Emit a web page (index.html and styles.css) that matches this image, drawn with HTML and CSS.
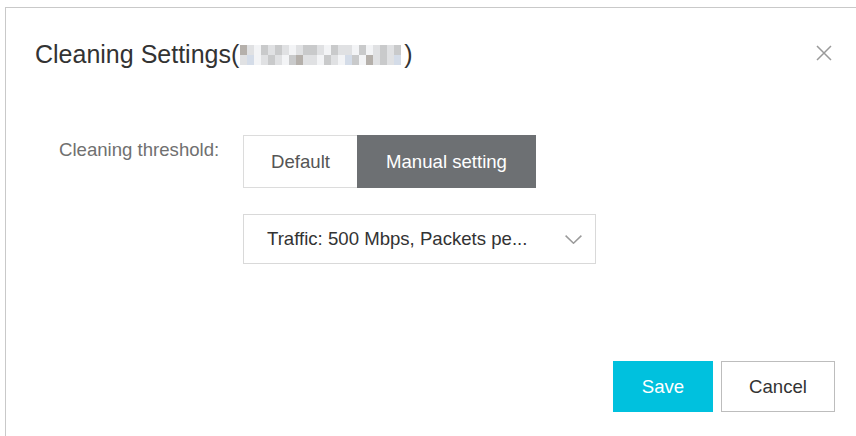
FILE: index.html
```html
<!DOCTYPE html>
<html lang="en">
<head>
<meta charset="utf-8">
<title>Cleaning Settings</title>
<link rel="stylesheet" href="styles.css">
</head>
<body>
<div class="dialog">
  <div class="dialog-header">
    <h1 class="dialog-title">Cleaning Settings(<span class="masked" aria-label="hidden address"><i class="d"></i><i class="l"></i><i class="w"></i><i class="m"></i><i class="l"></i><i class="m"></i><i class="l"></i><i class="w"></i><i class="l"></i><i class="m"></i><i class="m"></i><i class="l"></i><i class="w"></i><i class="m"></i><i class="l"></i><i class="l"></i><i class="w"></i><i class="m"></i><i class="w"></i><i class="l"></i><i class="m"></i><i class="l"></i><i class="m"></i><i class="l"></i><i class="b"></i><i class="w"></i><i class="l"></i><i class="m"></i><i class="l"></i><i class="w"></i><i class="m"></i><i class="d"></i><i class="l"></i><i class="l"></i><i class="w"></i><i class="m"></i><i class="l"></i><i class="w"></i><i class="b"></i><i class="m"></i><i class="w"></i><i class="d"></i><i class="l"></i><i class="m"></i><i class="l"></i><i class="b"></i></span>)</h1>
    <button class="close" type="button" aria-label="Close">
      <svg width="16" height="16" viewBox="0 0 16 16"><path d="M1 1L15 15M15 1L1 15" stroke="#9a9a9a" stroke-width="1.5" fill="none"/></svg>
    </button>
  </div>

  <div class="dialog-body">
    <div class="form-row">
      <label class="form-label">Cleaning threshold:</label>
      <div class="form-control">
        <div class="segmented">
          <button class="seg seg-default" type="button">Default</button>
          <button class="seg seg-manual active" type="button">Manual setting</button>
        </div>
        <div class="select">
          <span class="select-value">Traffic: 500 Mbps, Packets pe...</span>
          <svg class="chevron" width="17" height="9" viewBox="0 0 17 9"><path d="M0.6 0.6L8.5 8.2L16.4 0.6" stroke="#9a9a9a" stroke-width="1.5" fill="none"/></svg>
        </div>
      </div>
    </div>
  </div>

  <div class="dialog-footer">
    <button class="btn btn-primary" type="button">Save</button>
    <button class="btn btn-default" type="button">Cancel</button>
  </div>
</div>
</body>
</html>
```

FILE: styles.css
```css
html, body {
  margin: 0;
  padding: 0;
  background: #ffffff;
  overflow: hidden;
}

body {
  width: 856px;
  height: 436px;
  font-family: "Liberation Sans", Arial, sans-serif;
  color: #333333;
}

/* the dialog continues past the right and bottom edges of the view */
.dialog {
  margin: 7px 0 0 5px;
  width: 851px;
  height: 429px;
  box-sizing: border-box;
  border-top: 1px solid #c9c9c9;
  border-left: 1px solid #c9c9c9;
  background: #ffffff;
}

.dialog-header {
  height: 92px;
  padding: 0 24px 0 29px;
  display: flex;
  align-items: center;
  justify-content: space-between;
}

.dialog-title {
  margin: 0;
  font-size: 25px;
  font-weight: normal;
  line-height: 30px;
  color: #333333;
  display: flex;
  align-items: center;
}

.masked {
  display: inline-grid;
  grid-template-columns: repeat(23, 7px);
  grid-auto-rows: 10px;
  margin: 1px 3px 0 1px;
}

.masked i { display: block; }
.masked .w { background: #f3f4f6; }
.masked .l { background: #e0e1e3; }
.masked .m { background: #c9cacb; }
.masked .d { background: #b5b0ab; }
.masked .b { background: #d4dce8; }

.close {
  border: 0;
  background: none;
  padding: 0;
  width: 16px;
  height: 16px;
  display: flex;
  margin-top: -2px;
}

.dialog-body {
  padding: 35px 0 0 53px;
}

.form-row {
  display: flex;
  align-items: flex-start;
}

.form-label {
  width: 184px;
  font-size: 18.6px;
  line-height: 30px;
  color: #707070;
}

.form-control {
  display: flex;
  flex-direction: column;
  gap: 26px;
}

.segmented {
  display: flex;
}

.seg {
  height: 53px;
  box-sizing: border-box;
  font-family: inherit;
  font-size: 18.6px;
  padding: 0;
  border: 1px solid #dcdcdc;
  background: #ffffff;
  color: #555555;
}

.seg-default {
  width: 114px;
  border-right: 0;
}

.seg-manual {
  width: 179px;
}

.seg.active {
  background: #6d7073;
  border-color: #6d7073;
  color: #ffffff;
}

.select {
  width: 353px;
  height: 50px;
  box-sizing: border-box;
  border: 1px solid #d9d9d9;
  display: flex;
  align-items: center;
  justify-content: space-between;
  padding: 0 13px 0 23px;
}

.select-value {
  font-size: 18.6px;
  color: #333333;
  white-space: nowrap;
}

.chevron {
  margin-top: 1px;
}

.dialog-footer {
  display: flex;
  gap: 8px;
  padding: 97px 0 0 607px;
}

.btn {
  height: 51px;
  box-sizing: border-box;
  font-family: inherit;
  font-size: 18.6px;
  padding: 0;
}

.btn-primary {
  width: 100px;
  background: #00c1de;
  border: 1px solid #00c1de;
  color: #ffffff;
}

.btn-default {
  width: 114px;
  background: #ffffff;
  border: 1px solid #bdbdbd;
  color: #333333;
}
```
